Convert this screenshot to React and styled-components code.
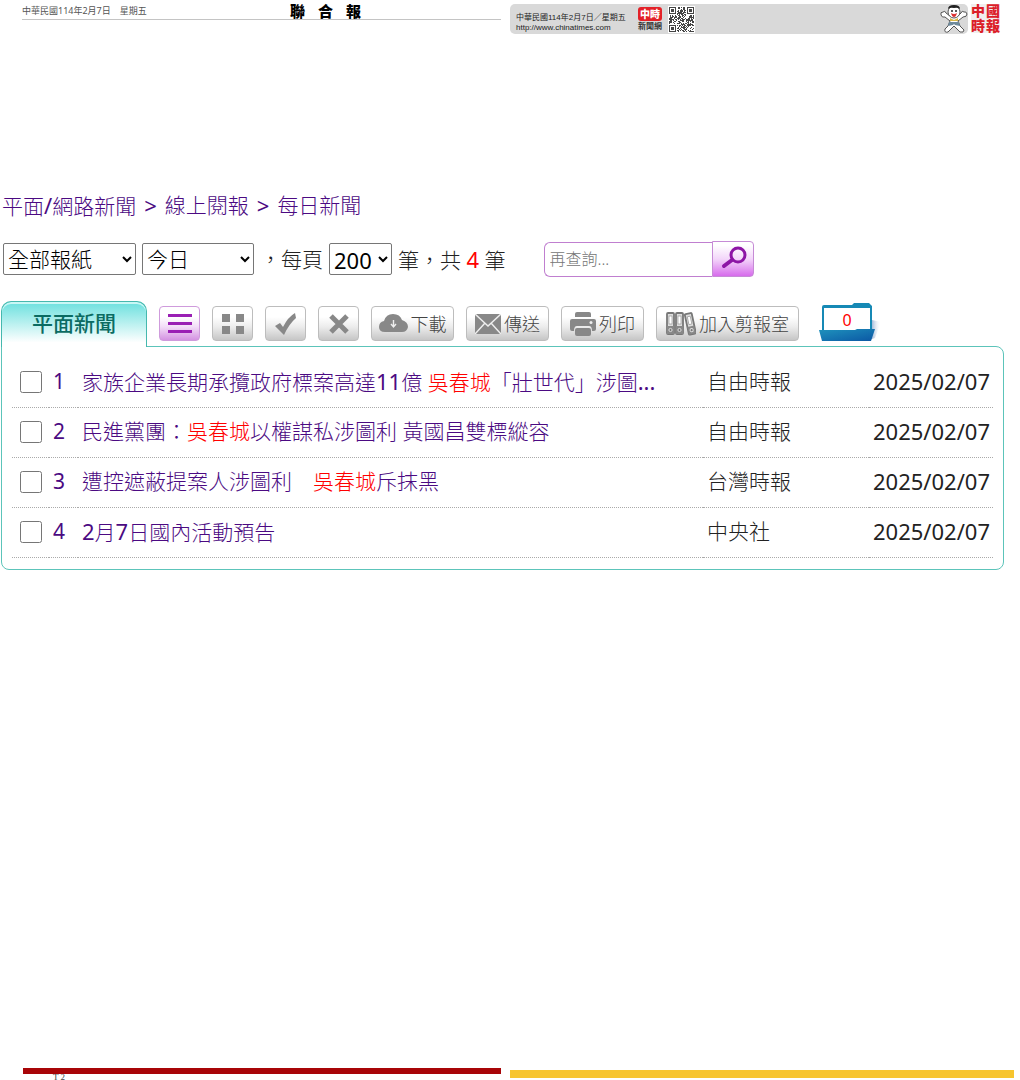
import React, { useState } from 'react';
import styled, { createGlobalStyle } from 'styled-components';

const articles = [
  {
    id: 1,
    title: [
      { text: '家族企業長期承攬政府標案高達11億 ' },
      { text: '吳春城', hit: true },
      { text: '「壯世代」涉圖...' },
    ],
    source: '自由時報',
    date: '2025/02/07',
  },
  {
    id: 2,
    title: [
      { text: '民進黨團：' },
      { text: '吳春城', hit: true },
      { text: '以權謀私涉圖利 黃國昌雙標縱容' },
    ],
    source: '自由時報',
    date: '2025/02/07',
  },
  {
    id: 3,
    title: [
      { text: '遭控遮蔽提案人涉圖利　' },
      { text: '吳春城', hit: true },
      { text: '斥抹黑' },
    ],
    source: '台灣時報',
    date: '2025/02/07',
  },
  {
    id: 4,
    title: [{ text: '2月7日國內活動預告' }],
    source: '中央社',
    date: '2025/02/07',
  },
];

// 25 x 25 modules, finder squares in three corners
function qrModules() {
  const cells = [];
  const size = 25;
  let seed = 11;
  for (let y = 0; y < size; y++) {
    for (let x = 0; x < size; x++) {
      seed = (seed * 1103515245 + 12345) % 2147483648;
      const fx = x > 16 ? x - 18 : x;
      const fy = y > 16 ? y - 18 : y;
      const corner = fx < 8 && fy < 8 && !(x > 16 && y > 16);
      if (corner) {
        const d = Math.max(Math.abs(fx - 3), Math.abs(fy - 3));
        if (d === 3 || d < 2) cells.push([x, y]);
      } else if (seed / 2147483648 > 0.48) {
        cells.push([x, y]);
      }
    }
  }
  return cells;
}

function QrCode() {
  return (
    <svg width="27" height="27" viewBox="-1 -1 27 27">
      <rect x="-1" y="-1" width="27" height="27" fill="#fff" />
      {qrModules().map(([x, y]) => (
        <rect key={`${x}-${y}`} x={x} y={y} width="1" height="1" fill="#444" />
      ))}
    </svg>
  );
}

function Mascot() {
  return (
    <svg width="28" height="30" viewBox="0 0 28 30">
      <g fill="#fff" stroke="#555" strokeWidth="1" strokeLinejoin="round">
        <path d="M10 12 L6 9 Q5 6 3 8 Q0 8 1 11 Q2 14 5 13 L10 17 L8 22 L5 25 Q4 29 8 28 L12 24 L14 22 L17 25 L20 28 Q24 29 24 26 L20 22 L18 17 L23 13 Q27 13 27 10 Q26 7 24 8 Q22 6 21 9 L18 12 Z" />
        <ellipse cx="14" cy="8" rx="6" ry="6" />
      </g>
      <path d="M8 5 Q8 1 14 1 Q20 1 20 5 Q18 3 14 4 Q10 3 8 5Z" fill="#222" />
      <circle cx="12" cy="7" r="1" fill="#222" />
      <circle cx="16" cy="7" r="1" fill="#222" />
      <path d="M11 9 Q14 11 17 9 Q16 13 14 13 Q12 13 11 9Z" fill="#d33" />
      <path d="M10 14 L14 16 L18 14 L18 17 L10 17Z" fill="#d9b84a" />
      <path d="M9 18 H19 L20 22 L15 21 L14 20 L13 21 L8 22Z" fill="#6f8b9c" />
    </svg>
  );
}

function SearchIcon() {
  return (
    <svg width="28" height="26" viewBox="0 0 28 26" fill="none" stroke="#8d15a6">
      <circle cx="19" cy="9" r="7" strokeWidth="3" />
      <path d="M13 14 L5 20" strokeWidth="4" strokeLinecap="round" />
    </svg>
  );
}

function ListIcon() {
  return (
    <svg width="24" height="20" viewBox="0 0 24 20" fill="#9a1fb4">
      <path d="M0 0h24v3H0zM0 8h24v3H0zM0 16h24v3H0z" />
    </svg>
  );
}

function GridIcon() {
  return (
    <svg width="22" height="20" viewBox="0 0 22 20" fill="#888">
      <path d="M0 0h8v8H0zM14 0h8v8h-8zM0 12h8v8H0zM14 12h8v8h-8z" />
    </svg>
  );
}

function CheckIcon() {
  return (
    <svg width="22" height="22" viewBox="0 0 22 22" fill="#888">
      <path d="M0 13 L5 10 L8 14 Q13 4 20 0 L21 5 Q14 11 9 22 Z" />
    </svg>
  );
}

function CrossIcon() {
  return (
    <svg width="20" height="20" viewBox="0 0 20 20" stroke="#888" strokeWidth="5">
      <path d="M2 2 L18 18 M18 2 L2 18" />
    </svg>
  );
}

function CloudIcon() {
  return (
    <svg width="29" height="19" viewBox="0 0 29 19">
      <path
        d="M6 18 Q0 18 0 13 Q0 8 5 7 Q7 0 14 0 Q21 0 23 6 Q29 8 29 13 Q28 18 23 18 Z"
        fill="#888"
      />
      <path d="M14.5 6 V12 M12 10 L14.5 13 L17 10" fill="none" stroke="#eee" strokeWidth="1.4" />
    </svg>
  );
}

function MailIcon() {
  return (
    <svg width="26" height="20" viewBox="0 0 26 20">
      <rect width="26" height="20" fill="#888" />
      <path
        d="M0 0 L13 12 L26 0 M0 20 L10 9 M26 20 L16 9"
        fill="none"
        stroke="#eee"
        strokeWidth="1.5"
      />
    </svg>
  );
}

function PrinterIcon() {
  return (
    <svg width="26" height="24" viewBox="0 0 26 24" fill="#888">
      <path d="M5 5 V2 Q5 0 7 0 H19 Q21 0 21 2 V5 Z" />
      <path d="M2 7 H24 Q26 7 26 9 V17 Q26 19 24 19 H22 Q22 14 19 14 H7 Q4 14 4 19 H2 Q0 19 0 17 V9 Q0 7 2 7Z" />
      <rect x="5" y="16" width="16" height="8" rx="2" />
      <circle cx="21" cy="10.5" r="1.5" fill="#eee" />
    </svg>
  );
}

function BindersIcon() {
  const binder = (
    <>
      <rect x="1" y="1" width="7" height="21" rx="1" fill="#ddd" stroke="#777" strokeWidth="1.8" />
      <rect x="3" y="4" width="3" height="8" fill="#fff" stroke="#888" strokeWidth=".6" />
      <rect x="1" y="14" width="7" height="8" fill="#888" />
      <circle cx="4.5" cy="18" r="1.6" fill="#777" stroke="#ddd" />
    </>
  );
  return (
    <svg width="30" height="24" viewBox="0 0 30 24">
      {binder}
      <g transform="translate(9 0)">{binder}</g>
      <g transform="translate(17.5 1.5) rotate(-12)">{binder}</g>
    </svg>
  );
}

function FolderIcon() {
  return (
    <svg width="62" height="40" viewBox="0 0 62 40">
      <defs>
        <linearGradient id="folderFront" x1="0" y1="0" x2="1" y2="1">
          <stop offset="0" stopColor="#1f93bd" />
          <stop offset="1" stopColor="#0b57a4" />
        </linearGradient>
        <linearGradient id="folderShade" x1="0" x2="1">
          <stop offset="0" stopColor="#5d86bd" />
          <stop offset="1" stopColor="#fff" stopOpacity="0" />
        </linearGradient>
      </defs>
      <path d="M53 18 L62 20 L56 36 L50 38Z" fill="url(#folderShade)" />
      <path d="M3 5 Q3 3 5 3 H33 L35 1 H50 L53 4 V34 H3Z" fill="#1689b5" />
      <path d="M5 6 H51 V29 H5Z" fill="#fff" />
      <path d="M0 28 H36 L38 27 H56 L52 39 H3Z" fill="url(#folderFront)" />
    </svg>
  );
}

// Latin letters and digits are set a step heavier than the Chinese text
function Mixed({ children }) {
  return children
    .split(/([\x21-\x7e]+)/)
    .map((run, i) => (i % 2 ? <Latin key={i}>{run}</Latin> : run));
}

function App() {
  const [picked, setPicked] = useState([]);
  const [query, setQuery] = useState('');

  const toggle = (id) => {
    setPicked(picked.includes(id) ? picked.filter((p) => p !== id) : [...picked, id]);
  };

  return (
    <Page>
      <GlobalStyle />
      <Mastheads>
        <UnitedMasthead>
          <PaperDate>中華民國114年2月7日　星期五</PaperDate>
          <UnitedLogo>
            <span>聯</span>
            <span>合</span>
            <span>報</span>
          </UnitedLogo>
        </UnitedMasthead>
        <ChinaMasthead>
          <ChinaStrip>
            <ChinaInfo>
              <span>中華民國114年2月7日／星期五</span>
              <span>http://www.chinatimes.com</span>
            </ChinaInfo>
            <SiteBadge>
              <strong>中時</strong>
              <span>新聞網</span>
            </SiteBadge>
            <QrCode />
            <MascotSlot>
              <Mascot />
            </MascotSlot>
          </ChinaStrip>
          <ChinaLogo>
            <span>中</span>
            <span>國</span>
            <span>時</span>
            <span>報</span>
          </ChinaLogo>
        </ChinaMasthead>
      </Mastheads>

      <Main>
        <Breadcrumb>
          <a href="#news">
            <Mixed>平面/網路新聞</Mixed>
          </a>
          <Latin>&gt;</Latin>
          <a href="#read">線上閱報</a>
          <Latin>&gt;</Latin>
          <a href="#daily">每日新聞</a>
        </Breadcrumb>

        <Filters>
          <Select $width={133} aria-label="報紙" defaultValue="all">
            <option value="all">全部報紙</option>
          </Select>
          <Select $width={112} aria-label="日期" defaultValue="today">
            <option value="today">今日</option>
          </Select>
          <label htmlFor="pageSize">，每頁</label>
          <PageSizeSelect $width={63} id="pageSize" defaultValue="200">
            <option value="200">200</option>
          </PageSizeSelect>
          <span>
            筆，共{' '}
            <Hit>
              <Latin>4</Latin>
            </Hit>{' '}
            筆
          </span>
          <SearchBox>
            <SearchInput
              aria-label="再查詢"
              placeholder="再查詢..."
              value={query}
              onChange={(e) => setQuery(e.target.value)}
            />
            <SearchButton aria-label="查詢">
              <SearchIcon />
            </SearchButton>
          </SearchBox>
        </Filters>

        <Toolbar>
          <Tab>平面新聞</Tab>
          <Tools>
            <ToolButton $active aria-label="列表">
              <ListIcon />
            </ToolButton>
            <ToolButton aria-label="圖示">
              <GridIcon />
            </ToolButton>
            <ToolButton aria-label="全選" onClick={() => setPicked(articles.map((a) => a.id))}>
              <CheckIcon />
            </ToolButton>
            <ToolButton aria-label="取消" onClick={() => setPicked([])}>
              <CrossIcon />
            </ToolButton>
            <ToolButton $width={83}>
              <CloudIcon />
              下載
            </ToolButton>
            <ToolButton $width={83}>
              <MailIcon />
              傳送
            </ToolButton>
            <ToolButton $width={83}>
              <PrinterIcon />
              列印
            </ToolButton>
            <ToolButton $width={143}>
              <BindersIcon />
              加入剪報室
            </ToolButton>
            <Folder href="#clippings">
              <FolderIcon />
              <FolderCount>0</FolderCount>
            </Folder>
          </Tools>
        </Toolbar>

        <Panel>
          <Table>
            <colgroup>
              <CheckCol />
              <NumberCol />
              <col />
              <SourceCol />
              <DateCol />
            </colgroup>
            <tbody>
              {articles.map((article) => (
                <tr key={article.id}>
                  <CheckCell>
                    <Checkbox
                      type="checkbox"
                      aria-label={`選取 ${article.id}`}
                      checked={picked.includes(article.id)}
                      onChange={() => toggle(article.id)}
                    />
                  </CheckCell>
                  <NumberCell>{article.id}</NumberCell>
                  <Cell>
                    <TitleLink href={`#article-${article.id}`}>
                      {article.title.map((part) =>
                        part.hit ? (
                          <Hit key={part.text}>{part.text}</Hit>
                        ) : (
                          <Mixed key={part.text}>{part.text}</Mixed>
                        )
                      )}
                    </TitleLink>
                  </Cell>
                  <Cell>{article.source}</Cell>
                  <DateCell>{article.date}</DateCell>
                </tr>
              ))}
            </tbody>
          </Table>
        </Panel>
      </Main>

      <Footer>
        <RedRule>T 2</RedRule>
        <YellowRule />
      </Footer>
    </Page>
  );
}

export default App;

const GlobalStyle = createGlobalStyle`
  * {
    box-sizing: border-box;
  }
  body {
    margin: 0;
    background: #fff;
    color: #222;
    font-family: 'Noto Sans', 'Noto Sans CJK TC', sans-serif;
    font-size: 21px;
    font-weight: 300;
    line-height: 32px;
  }
  a {
    color: #4b0a82;
    text-decoration: none;
  }
  button, input, select {
    font: inherit;
  }
  svg {
    display: block;
    flex-shrink: 0;
  }
`;

const Page = styled.div`
  min-height: 100vh;
  display: flex;
  flex-direction: column;
`;

const Latin = styled.span`
  font-size: 22px;
  font-weight: 400;
`;

const Hit = styled.span`
  color: #f00;
`;

const Mastheads = styled.header`
  display: grid;
  grid-template-columns: 479fr 490fr;
  gap: 9px;
  padding: 0 20px 0 22px;
  height: 40px;
`;

const UnitedMasthead = styled.div`
  display: flex;
  align-items: center;
  height: 20px;
  padding-top: 3px;
  border-bottom: 1px solid #c4c4c4;
`;

const PaperDate = styled.span`
  flex: 0 0 268px;
  font-size: 9px;
  color: #555;
  font-weight: 400;
`;

const UnitedLogo = styled.strong`
  display: flex;
  gap: 13px;
  font-family: 'Noto Sans CJK TC', sans-serif;
  font-size: 15px;
  line-height: 16px;
  font-weight: 900;
  color: #000;
`;

const ChinaMasthead = styled.div`
  display: flex;
  align-items: flex-start;
  gap: 3px;
  padding-top: 4px;
`;

const ChinaStrip = styled.div`
  flex: 1;
  display: flex;
  align-items: center;
  height: 30px;
  padding-left: 6px;
  border-radius: 5px;
  background: #d9d9d9;
`;

const ChinaInfo = styled.div`
  display: flex;
  flex-direction: column;
  flex: 0 0 122px;
  padding-top: 8px;
  font-family: 'Liberation Sans', 'Noto Sans CJK TC', sans-serif;
  font-size: 8px;
  line-height: 10px;
  font-weight: 400;
  color: #222;
`;

const SiteBadge = styled.div`
  display: flex;
  flex-direction: column;
  align-items: center;
  width: 24px;
  margin-right: 6px;
  font-size: 8px;
  line-height: 10px;
  font-weight: 700;
  color: #333;
  strong {
    width: 24px;
    border-radius: 3px;
    background: #e32128;
    color: #fff;
    font-size: 10px;
    line-height: 14px;
    text-align: center;
  }
`;

const MascotSlot = styled.div`
  margin-left: auto;
`;

const ChinaLogo = styled.strong`
  display: grid;
  grid-template-columns: 14px 14px;
  gap: 1px;
  background: #f1eeee;
  color: #dc2028;
  font-size: 14px;
  line-height: 14px;
  font-weight: 900;
`;

const Main = styled.main`
  flex: 1;
  padding: 149px 16px 20px 1px;
`;

const Breadcrumb = styled.nav`
  display: flex;
  gap: 8px;
  padding-left: 1px;
  color: #4b0a82;
`;

const Filters = styled.div`
  display: flex;
  align-items: center;
  gap: 6px;
  height: 36px;
  margin-top: 19px;
  padding-left: 2px;
  white-space: nowrap;
`;

const Select = styled.select`
  width: ${(props) => props.$width}px;
  height: 32px;
  padding: 0 2px 0 0;
  border: 1px solid #767676;
  border-radius: 2px;
  background: #fff;
  color: #000;
`;

const PageSizeSelect = styled(Select)`
  padding: 0 0 2px;
  font-size: 22px;
  font-weight: 400;
`;

const SearchBox = styled.form`
  display: flex;
  align-items: center;
  margin-left: 32px;
`;

const SearchInput = styled.input`
  width: 168px;
  height: 35px;
  padding: 0 5px;
  border: 1px solid #c07fd0;
  border-right: none;
  border-radius: 6px 0 0 6px;
  font-size: 16px;
  outline: none;
`;

const SearchButton = styled.button`
  display: flex;
  align-items: center;
  justify-content: center;
  width: 42px;
  height: 36px;
  padding: 0;
  border: 1px solid #c68bd6;
  border-radius: 0 4px 4px 0;
  background: linear-gradient(#fff 10%, #f3d6fa 50%, #d76bec);
  cursor: pointer;
`;

const Toolbar = styled.div`
  display: flex;
  align-items: flex-end;
  gap: 12px;
  margin-top: 24px;
`;

const Tab = styled.button`
  position: relative;
  width: 146px;
  height: 46px;
  margin-bottom: -1px;
  padding: 0 0 3px;
  border: 1px solid #45b8ae;
  border-bottom: none;
  border-radius: 10px 10px 0 0;
  background: linear-gradient(#6be0de, #fff 90%);
  box-shadow: inset 0 2px 0 #c9f7f5;
  color: #0b6b62;
  font-weight: 500;
  cursor: pointer;
`;

const Tools = styled.div`
  display: flex;
  align-items: flex-end;
  gap: 12px;
  padding-bottom: 5px;
`;

const ToolButton = styled.button`
  display: flex;
  align-items: center;
  justify-content: center;
  gap: 3px;
  width: ${(props) => props.$width || 41}px;
  height: 35px;
  padding: 0;
  border: 1px solid ${(props) => (props.$active ? '#cf9bdc' : '#bdbdbd')};
  border-radius: 4px;
  background: ${(props) =>
    props.$active
      ? 'linear-gradient(#fff 30%, #f2dcf7 60%, #d492e2)'
      : 'linear-gradient(#fff 30%, #ececec 60%, #c6c6c6)'};
  color: #444;
  font-size: 18px;
  white-space: nowrap;
  cursor: pointer;
`;

const Folder = styled.a`
  position: relative;
  margin-left: 8px;
  height: 39px;
`;

const FolderCount = styled.span`
  position: absolute;
  top: 6px;
  left: 5px;
  width: 46px;
  color: #f00;
  font-size: 16px;
  font-weight: 400;
  line-height: 24px;
  text-align: center;
`;

const Panel = styled.section`
  padding: 10px 10px 11px;
  border: 1px solid #5cc4ba;
  border-radius: 0 8px 8px 8px;
`;

const Table = styled.table`
  width: 100%;
  table-layout: fixed;
  border-collapse: collapse;
`;

const CheckCol = styled.col`
  width: 37px;
`;

const NumberCol = styled.col`
  width: 29px;
`;

const SourceCol = styled.col`
  width: 166px;
`;

const DateCol = styled.col`
  width: 124px;
`;

const Cell = styled.td`
  height: 50px;
  padding: 0 0 2px 4px;
  border-bottom: 1px dotted #aaa;
  white-space: nowrap;
`;

const CheckCell = styled(Cell)`
  padding: 0 0 0 8px;
`;

const NumberCell = styled(Cell)`
  color: #4b0a82;
  font-weight: 400;
`;

const DateCell = styled(Cell)`
  font-size: 22px;
  font-weight: 400;
`;

const Checkbox = styled.input`
  display: block;
  width: 22px;
  height: 22px;
  margin: 0;
`;

const TitleLink = styled.a`
  display: block;
  height: 32px;
  overflow: hidden;
  text-overflow: ellipsis;
`;

const Footer = styled.footer`
  display: grid;
  grid-template-columns: 478fr 504fr;
  gap: 9px;
  height: 12px;
  padding: 0 6px 0 23px;
  overflow: hidden;
`;

const RedRule = styled.div`
  height: 12px;
  padding-left: 30px;
  border-top: 6px solid #a80508;
  color: #444;
  font-family: 'Liberation Serif', serif;
  font-size: 9px;
  line-height: 6px;
`;

const YellowRule = styled.div`
  height: 8px;
  margin-top: 2px;
  background: #f7c52f;
`;
